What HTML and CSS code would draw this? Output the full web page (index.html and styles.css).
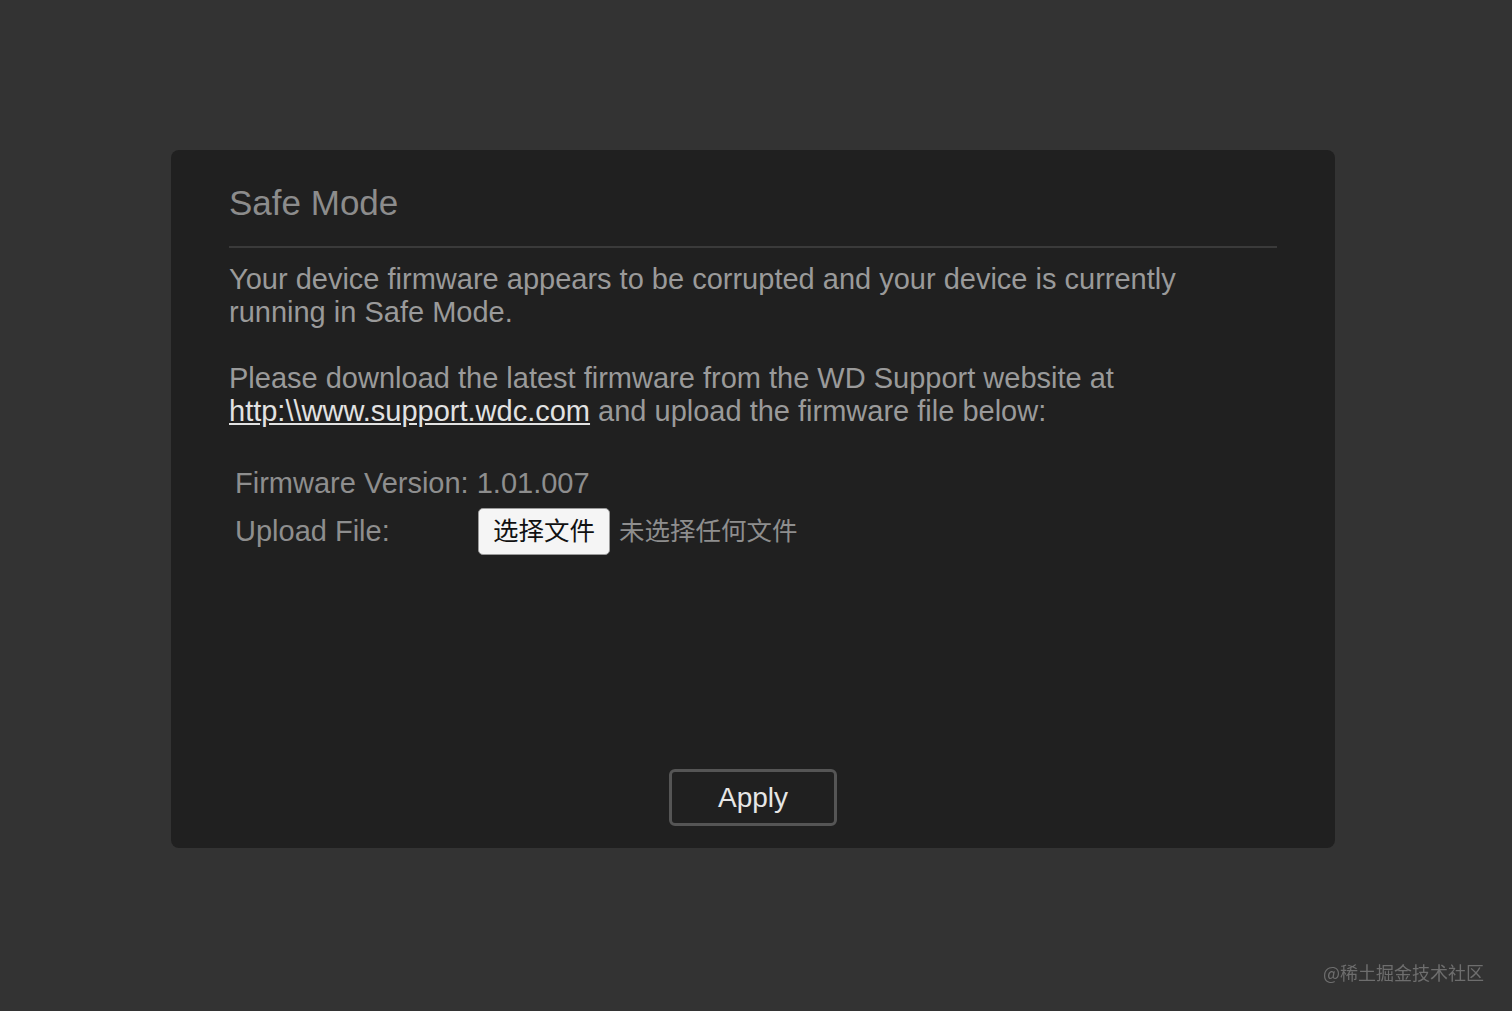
FILE: index.html
```html
<!DOCTYPE html>
<html lang="zh-CN">
<head>
    <meta charset="UTF-8">
    <meta name="viewport" content="width=device-width, initial-scale=1.0">
    <title>Safe Mode</title>
    <link rel="stylesheet" href="styles.css">
</head>
<body>
    <div class="panel">
        <h2 class="panel-title">Safe Mode</h2>
        <p class="message">Your device firmware appears to be corrupted and your device is currently<br>running in Safe Mode.</p>
        <p class="message">Please download the latest firmware from the WD Support website at<br><a href="#">http:\\www.support.wdc.com</a> and upload the firmware file below:</p>

        <div class="fw-info">
            <div class="fw-version">Firmware Version: 1.01.007</div>
            <div class="fw-label">Upload File:</div>
            <div class="fw-file">
                <label class="file-btn" for="fw-upload">选择文件</label>
                <span class="file-name">未选择任何文件</span>
                <input type="file" id="fw-upload" class="file-hidden">
            </div>
        </div>

        <div class="actions">
            <button class="apply-btn">Apply</button>
        </div>
    </div>

    <div class="watermark">@稀土掘金技术社区</div>
</body>
</html>
```

FILE: styles.css
```css
body {
    margin: 0;
    padding: 150px 0 0 171px;
    background-color: #333333;
    font-family: "Liberation Sans", Arial, "Noto Sans CJK SC", sans-serif;
    height: 100vh;
    box-sizing: border-box;
    overflow: hidden;
}
.panel {
    width: 1164px;
    height: 698px;
    box-sizing: border-box;
    background: #202020;
    border-radius: 8px;
    padding: 33px 58px 22px 58px;
    display: flex;
    flex-direction: column;
}
.panel-title {
    margin: 0 0 15px 0;
    font-size: 35px;
    line-height: 40px;
    font-weight: normal;
    color: #8c8c8c;
    padding-bottom: 23px;
    border-bottom: 2px solid #3a3a3a;
}
.message {
    margin: 0 0 33px 0;
    font-size: 29px;
    line-height: 33px;
    color: #9a9a9a;
}
.message a {
    color: #e2e2e2;
    text-decoration: underline;
}
.fw-info {
    margin-top: 6px;
    padding-left: 6px;
    display: grid;
    grid-template-columns: 243px auto;
    row-gap: 8px;
    font-size: 29px;
    line-height: 33px;
    color: #8e8e8e;
}
.fw-version {
    grid-column: 1 / 3;
}
.fw-label {
    display: flex;
    align-items: center;
}
.fw-file {
    display: flex;
    align-items: center;
    gap: 9px;
}
.file-btn {
    display: inline-flex;
    align-items: center;
    justify-content: center;
    width: 132px;
    height: 47px;
    box-sizing: border-box;
    padding-bottom: 5px;
    background: #f5f5f5;
    border: 1px solid #9a9a9a;
    border-radius: 5px;
    color: #111111;
    font-family: "Noto Sans CJK SC", sans-serif;
    font-size: 25.5px;
    line-height: 1;
    cursor: pointer;
}
.file-name {
    padding-bottom: 5px;
    font-family: "Noto Sans CJK SC", sans-serif;
    font-size: 25.5px;
    line-height: 1;
    color: #8e8e8e;
}
.file-hidden {
    display: none;
}
.actions {
    margin-top: auto;
    display: flex;
    justify-content: center;
}
.apply-btn {
    width: 168px;
    height: 57px;
    box-sizing: border-box;
    background: #202020;
    border: 3px solid #555555;
    border-radius: 6px;
    color: #e6e6e6;
    font-family: "Liberation Sans", Arial, sans-serif;
    font-size: 28px;
    cursor: pointer;
}
.watermark {
    position: fixed;
    right: 28px;
    bottom: 27px;
    font-family: "Noto Sans CJK SC", sans-serif;
    font-size: 18px;
    line-height: 24px;
    color: #6e6e6e;
}
```
